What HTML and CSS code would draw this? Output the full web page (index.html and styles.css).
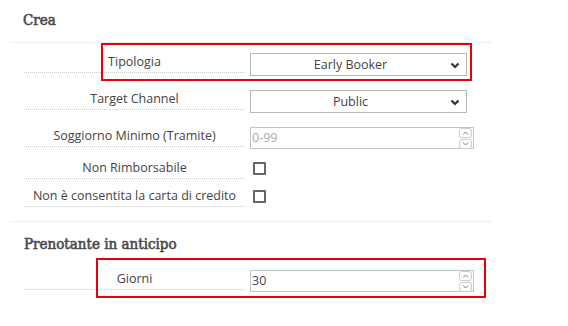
FILE: index.html
```html
<!doctype html>
<html lang="it">
  <head>
    <meta charset="UTF-8" />
    <title>Crea</title>
    <link rel="stylesheet" href="styles.css">
  </head>
  <body>
    <div class="panel">
      <h3 class="section-title">Crea</h3>
      <div class="form">
        <div class="row">
          <div class="field-label">Tipologia</div>
          <div class="select">
            <span>Early Booker</span>
            <svg class="chevron" width="10" height="7" viewBox="0 0 10 7"><path d="M1.5 1.5 L5 5 L8.5 1.5" fill="none" stroke="#333" stroke-width="2.2"/></svg>
          </div>
          <div class="highlight hl-tipologia"></div>
        </div>
        <div class="row">
          <div class="field-label">Target Channel</div>
          <div class="select">
            <span>Public</span>
            <svg class="chevron" width="10" height="7" viewBox="0 0 10 7"><path d="M1.5 1.5 L5 5 L8.5 1.5" fill="none" stroke="#333" stroke-width="2.2"/></svg>
          </div>
        </div>
        <div class="row row-input">
          <div class="field-label">Soggiorno Minimo (Tramite)</div>
          <div class="number">
            <span class="placeholder">0-99</span>
            <div class="spinner">
              <span class="spin-btn"><svg width="7" height="4" viewBox="0 0 7 4"><path d="M1 3.5 L3.5 1 L6 3.5" fill="none" stroke="#777" stroke-width="1"/></svg></span>
              <span class="spin-btn"><svg width="7" height="4" viewBox="0 0 7 4"><path d="M1 0.5 L3.5 3 L6 0.5" fill="none" stroke="#777" stroke-width="1"/></svg></span>
            </div>
          </div>
        </div>
        <div class="row row-check">
          <div class="field-label">Non Rimborsabile</div>
          <span class="checkbox"></span>
        </div>
        <div class="row row-check">
          <div class="field-label">Non è consentita la carta di credito</div>
          <span class="checkbox"></span>
        </div>
      </div>

      <h3 class="section-title section-next">Prenotante in anticipo</h3>
      <div class="form form-next">
        <div class="row">
          <div class="field-label">Giorni</div>
          <div class="number">
            <span class="value">30</span>
            <div class="spinner">
              <span class="spin-btn"><svg width="7" height="4" viewBox="0 0 7 4"><path d="M1 3.5 L3.5 1 L6 3.5" fill="none" stroke="#777" stroke-width="1"/></svg></span>
              <span class="spin-btn"><svg width="7" height="4" viewBox="0 0 7 4"><path d="M1 0.5 L3.5 3 L6 0.5" fill="none" stroke="#777" stroke-width="1"/></svg></span>
            </div>
          </div>
          <div class="highlight hl-giorni"></div>
        </div>
      </div>
    </div>
  </body>
</html>
```

FILE: styles.css
```css
body {
  margin: 0;
  font-family: "Open Sans", Arial, sans-serif;
  font-size: 12.5px;
  color: #444;
  background: #fff;
}
.panel {
  width: 482px;
  margin-left: 10px;
}
.section-title {
  margin: 0;
  padding: 11px 13px 13px;
  font-family: "DejaVu Serif Condensed", "DejaVu Serif", serif;
  font-stretch: condensed;
  font-size: 15px;
  font-weight: normal;
  -webkit-text-stroke: 0.6px #4a4a4a;
  color: #4a4a4a;
  border-bottom: 1px solid #eee;
}
.section-next {
  border-bottom: none;
  border-top: 1px solid #eee;
  padding: 13px 14px 8px;
}
.form {
  padding: 9px 0 14px 14px;
}
.form-next {
  padding-top: 8px;
}
.row {
  position: relative;
  display: flex;
  align-items: flex-start;
  margin-bottom: 13px;
}
.row-input {
  margin-bottom: 9px;
}
.row-check {
  margin-bottom: 7px;
}
.form .row:last-child {
  margin-bottom: 0;
}
.field-label {
  width: 221px;
  height: 20px;
  line-height: 20px;
  text-align: center;
  border-bottom: 1px dotted #ccc;
  margin-right: 5px;
  white-space: nowrap;
}
.select {
  position: relative;
  width: 215px;
  height: 21px;
  margin-top: 1px;
  border: 1px solid #b8b8b8;
  line-height: 21px;
  text-align: center;
  color: #444;
}
.select span {
  padding-right: 16px;
}
.chevron {
  position: absolute;
  right: 6px;
  top: 8px;
}
.number {
  position: relative;
  width: 221px;
  height: 20px;
  margin-top: 1px;
  border: 1px solid #c4c4c4;
  line-height: 20px;
  padding-left: 1px;
}
.placeholder {
  color: #b0a8a0;
}
.value {
  color: #444;
}
.spinner {
  position: absolute;
  right: 1px;
  top: 0;
  display: flex;
  flex-direction: column;
  gap: 1px;
}
.spin-btn {
  width: 13px;
  height: 10px;
  border: 1px solid #ccc;
  border-radius: 3px;
  display: flex;
  align-items: center;
  justify-content: center;
  box-sizing: border-box;
}
.checkbox {
  display: block;
  width: 9px;
  height: 9px;
  margin: 4px 0 0 3px;
  border: 2px solid #666;
  border-radius: 1px;
}
.highlight {
  position: absolute;
  border: 2px solid #e8000b;
  pointer-events: none;
}
.hl-tipologia {
  left: 77px;
  top: -9px;
  width: 367px;
  height: 34px;
}
.hl-giorni {
  left: 72px;
  top: -11px;
  width: 386px;
  height: 36px;
}
```
